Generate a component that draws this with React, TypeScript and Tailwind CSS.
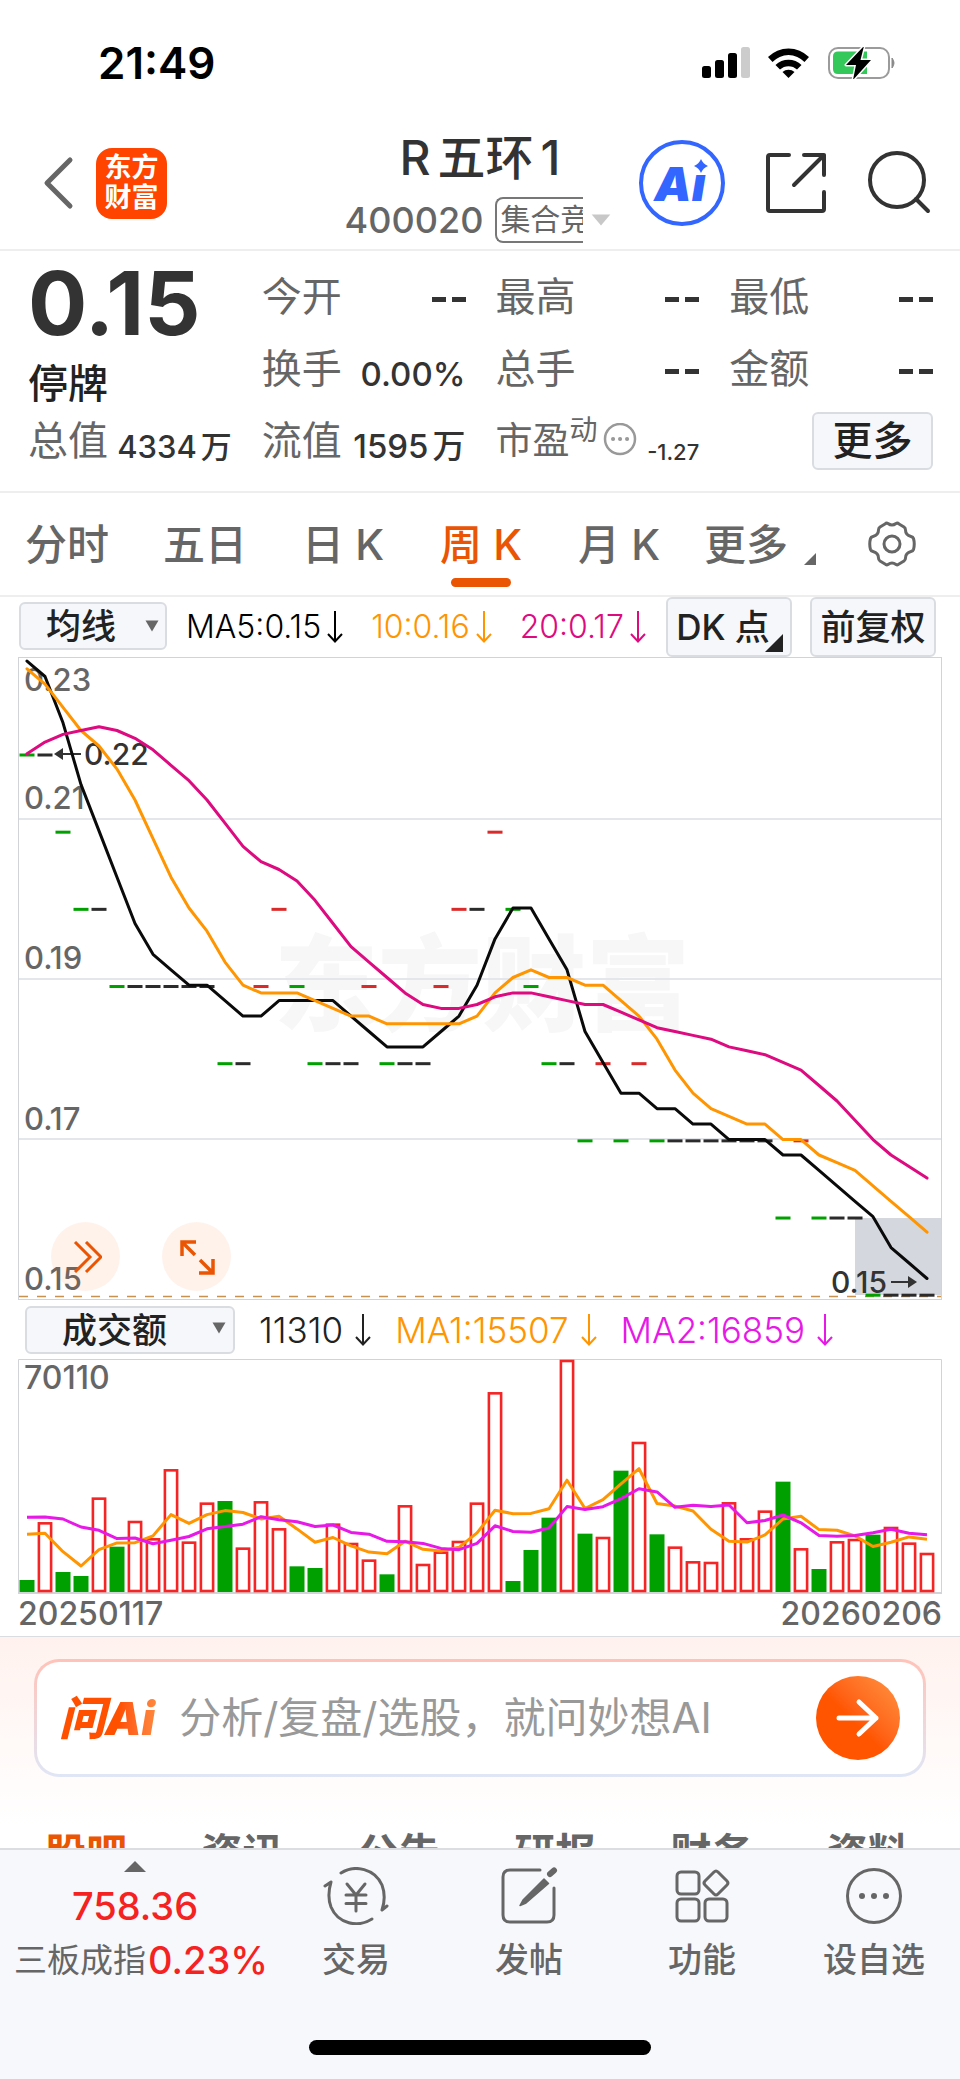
import React from "react";

/* ---------- data ---------- */

const STEP = 18;
const FIRST = 9;
const xAt = (i: number) => FIRST + i * STEP;

const PRIOR_CLOSES = [19, 19, 19, 19, 20, 21, 22, 23, 23, 24, 24, 24, 23, 22, 22, 23, 24, 24, 23];
const CLOSES = [
  22, 22, 21, 20, 20, 19, 19, 19, 19, 19, 19, 18, 18, 19, 20, 19, 18, 18, 18, 19, 18, 18, 18, 19, 20, 20, 21, 20, 19,
  18, 18, 17, 18, 17, 18, 17, 17, 17, 17, 17, 17, 17, 16, 17, 16, 16, 16, 15, 15, 15, 15,
];

const PRIOR_VOLUMES = [199, 120, 288, 383, 385, 194, 335, 263, 37];
const VOLUMES = [
  36, 209, 60, 48, 283, 136, 213, 161, 368, 151, 268, 273, 133, 272, 191, 77, 72, 205, 147, 97, 53, 260, 84, 121, 153,
  268, 599, 33, 126, 223, 696, 175, 165, 364, 450, 173, 136, 92, 90, 269, 161, 244, 331, 131, 69, 152, 159, 172, 195,
  148, 117,
];
const DOWN_BARS = new Set([0, 2, 3, 5, 11, 15, 16, 20, 27, 28, 29, 31, 33, 35, 42, 44, 47]);

function movingAverage(prior: number[], values: number[], span: number) {
  const all = [...prior, ...values];
  return values.map((_, i) => {
    const end = prior.length + i + 1;
    const part = all.slice(Math.max(0, end - span), end);
    return part.reduce((a, b) => a + b, 0) / part.length;
  });
}

const priceY = (p: number) => 98 + (22 - p) * 77.17;
const priceLine = (span: number) =>
  movingAverage(PRIOR_CLOSES, CLOSES, span)
    .map((p, i) => `${xAt(i)},${(priceY(p) - 1.3).toFixed(1)}`)
    .join(" ");

const volumeY = (v: number) => 233 - v / 3;
const volumeLine = (span: number) =>
  movingAverage(PRIOR_VOLUMES, VOLUMES, span)
    .map((v, i) => `${xAt(i)},${volumeY(v).toFixed(1)}`)
    .join(" ");

/* ---------- icons ---------- */

function StatusIcons() {
  return (
    <svg className="h-8 w-[194px]" viewBox="0 0 194 32" aria-hidden="true">
      <rect x="0" y="19" width="9" height="12" rx="2.5" />
      <rect x="13" y="13" width="9" height="18" rx="2.5" />
      <rect x="26" y="6" width="9" height="25" rx="2.5" />
      <rect x="39" y="0" width="9" height="31" rx="2.5" fill="#cccccc" />
      <path d="M66 10 A29 29 0 0 1 107 10 L102.500 15 A22 22 0 0 0 70.500 15 Z" />
      <path d="M73.500 18 A18.500 18.500 0 0 1 99.500 18 L95 22.500 A12.500 12.500 0 0 0 78 22.500 Z" />
      <path d="M80.500 25 A9 9 0 0 1 92.500 25 L86.500 31 Z" />
      <rect x="127" y="1" width="60" height="30" rx="9" fill="none" stroke="#9b9b9b" strokeWidth="2" />
      <path d="M190 11 Q194 16 190 21 Z" fill="#8a8a8a" stroke="#8a8a8a" />
      <path d="M136 4.500 H165 V27 H136 Q131 27 131 22 V9.500 Q131 4.500 136 4.500 Z" fill="#34c759" />
      <path
        d="M162 -1 L144 18 H154 L151 33 L169 13 H158.500 Z"
        fill="#000"
        stroke="#fff"
        strokeWidth="3"
        paintOrder="stroke"
        strokeLinejoin="round"
      />
    </svg>
  );
}

function DownArrow() {
  return (
    <svg className="h-8 w-4 shrink-0" viewBox="0 0 16 32" fill="none" stroke="currentColor" strokeWidth="2" aria-hidden="true">
      <path d="M8 0 V30 M1 23 L8 30.500 L15 23" />
    </svg>
  );
}

function Caret({ className }: { className: string }) {
  return (
    <svg className={className} viewBox="0 0 14 12" preserveAspectRatio="none" aria-hidden="true">
      <path d="M0.500 0.500 H13.500 L7 11.500 Z" fill="currentColor" />
    </svg>
  );
}

function GearIcon() {
  return (
    <svg className="size-12" viewBox="0 0 48 48" fill="none" stroke="#666" strokeWidth="3" strokeLinejoin="round" aria-hidden="true">
      <path d="M17 4 Q18.500 2.500 20 3.500 Q24 6.500 28 3.500 Q29.500 2.500 31 4 L36 7 Q37.500 8 37.500 10 Q37.500 15 43 16.500 Q45 17 45.500 18.500 Q47 24 45.500 29.500 Q45 31 43 31.500 Q37.500 33 37.500 38 Q37.500 40 36 41 L31 44 Q29.500 45.500 28 44.500 Q24 41.500 20 44.500 Q18.500 45.500 17 44 L12 41 Q10.500 40 10.500 38 Q10.500 33 5 31.500 Q3 31 2.500 29.500 Q1 24 2.500 18.500 Q3 17 5 16.500 Q10.500 15 10.500 10 Q10.500 8 12 7 Z" />
      <circle cx="24" cy="24" r="8" />
    </svg>
  );
}

function TradeIcon() {
  return (
    <svg className="h-[58px] w-[66px]" viewBox="0 0 66 58" fill="none" stroke="#666" strokeWidth="3" strokeLinecap="round" strokeLinejoin="round" aria-hidden="true">
      <path d="M18 6 C32 -3 52 2 59 18 C62 26 62 34 59 43 L64 39" />
      <path d="M49 52 C35 61 15 57 8 40 C5 32 5 25 8 15 L2 19" />
      <path d="M24 17 L33 28 L42 17 M23 28 H43 M23 36.500 H43 M33 28 V44" />
    </svg>
  );
}

function PostIcon() {
  return (
    <svg className="h-[58px] w-[58px]" viewBox="0 0 58 58" fill="none" stroke="#666" strokeWidth="3" strokeLinecap="round" aria-hidden="true">
      <path d="M40 3 H10 Q3 3 3 10 V48 Q3 55 10 55 H47 Q54 55 54 48 V21" />
      <path d="M50 7 L54 3.500" strokeWidth="6" />
      <path d="M44 12 L48.500 16.500 L26 36 L20 38.500 L23 33 Z" fill="#666" strokeWidth="1.500" strokeLinejoin="round" />
    </svg>
  );
}

function GridIcon() {
  return (
    <svg className="h-[58px] w-[58px]" viewBox="0 0 58 58" fill="none" stroke="#666" strokeWidth="3" strokeLinejoin="round" aria-hidden="true">
      <rect x="4" y="5" width="22" height="22" rx="4" />
      <rect x="4" y="32" width="22" height="22" rx="4" />
      <rect x="32" y="32" width="22" height="22" rx="4" />
      <path d="M41 5 Q43 3 45 5 L54 14 Q56 16 54 18 L45 27 Q43 29 41 27 L32 18 Q30 16 32 14 Z" />
    </svg>
  );
}

function MoreIcon() {
  return (
    <svg className="h-[58px] w-[58px]" viewBox="0 0 58 58" fill="none" stroke="#666" strokeWidth="3" aria-hidden="true">
      <circle cx="29" cy="29" r="26.500" />
      <g fill="#666" stroke="none">
        <circle cx="17" cy="29" r="3" />
        <circle cx="29" cy="29" r="3" />
        <circle cx="41" cy="29" r="3" />
      </g>
    </svg>
  );
}

/* ---------- sections ---------- */

function Header() {
  return (
    <header className="grid grid-cols-[1fr_auto_1fr] items-center border-b-2 border-[#eeeeee] pt-px pb-[6px]">
      <div className="flex items-center gap-[22px] pb-1 pl-[42px]">
        <button aria-label="返回">
          <svg className="h-14 w-8" viewBox="0 0 32 56" fill="none" stroke="#666" strokeWidth="5" strokeLinecap="round" strokeLinejoin="round">
            <path d="M28 5 L5 28 L28 51" />
          </svg>
        </button>
        <a href="#home" className="flex size-[71px] flex-col items-center justify-center rounded-2xl bg-[#ff4400] text-[27px] leading-[30px] font-bold text-white">
          <span>东方</span>
          <span>财富</span>
        </a>
      </div>
      <div className="flex flex-col items-center text-[#333]">
        <h1 className="flex gap-[7px] text-[48px] leading-[62px] font-medium">
          <span>R</span>
          <span>五环</span>
          <span>1</span>
        </h1>
        <div className="mt-2 flex items-center gap-3 pr-1 text-[#666]">
          <span className="text-[36px] leading-[46px] font-medium">400020</span>
          <span className="h-[46px] w-[88px] overflow-hidden rounded-l-lg border-2 border-r-0 border-[#777] pl-[3px] text-[30px] leading-[41px] whitespace-nowrap">
            集合竞
          </span>
          <Caret className="-ml-1 h-3 w-5 text-[#c8c8c8]" />
        </div>
      </div>
      <div className="flex items-center justify-end gap-[39px] pr-[29px] pb-1">
        <button aria-label="Ai" className="relative flex size-[86px] items-center justify-center rounded-full border-4 border-[#3366ff] pr-1 text-[47px] leading-none font-black text-[#3366ff] italic">
          Aı
          <svg className="absolute top-[15px] left-[51px] size-[14px]" viewBox="0 0 14 14" aria-hidden="true">
            <path d="M7 0 Q9 5 14 7 Q9 9 7 14 Q5 9 0 7 Q5 5 7 0 Z" fill="#3366ff" />
          </svg>
        </button>
        <button aria-label="分享">
          <svg className="size-16" viewBox="0 0 64 64" fill="none" stroke="#333" strokeWidth="4" strokeLinecap="round" strokeLinejoin="round">
            <path d="M25 4 H6 Q4 4 4 6 V58 Q4 60 6 60 H58 Q60 60 60 58 V41 M40 4 H60 V24 M60 4 L30 34" />
          </svg>
        </button>
        <button aria-label="搜索">
          <svg className="size-16" viewBox="0 0 64 64" fill="none" stroke="#333" strokeWidth="4" strokeLinecap="round">
            <circle cx="30" cy="29" r="27" />
            <path d="M49 48 L61 60" />
          </svg>
        </button>
      </div>
    </header>
  );
}

function Stat({ label, value, unit, small }: { label: string; value: string; unit?: string; small?: boolean }) {
  return (
    <div className="flex h-[72px] items-center justify-between whitespace-nowrap">
      <span className="text-[40px] leading-[68px] text-[#666]">{label}</span>
      <span className={`mt-3 flex items-baseline gap-1 font-medium text-[#333] ${small ? "text-[31px]" : "text-[33px]"}`}>
        {value}
        {unit && <span>{unit}</span>}
      </span>
    </div>
  );
}

function Empty({ label }: { label: string }) {
  return (
    <div className="flex h-[72px] items-center justify-between whitespace-nowrap">
      <span className="text-[40px] leading-[68px] text-[#666]">{label}</span>
      <span className="mt-1 flex gap-[6px]" aria-label="--">
        <span className="h-[5px] w-[14px] bg-[#333]" />
        <span className="h-[5px] w-[14px] bg-[#333]" />
      </span>
    </div>
  );
}

function Quote() {
  return (
    <section className="grid grid-cols-4 gap-x-[30px] border-b-2 border-[#eeeeee] pt-[10px] pr-[27px] pb-[14px] pl-[28px]">
      <div className="row-span-2 flex flex-col gap-[18px] text-[#333]">
        <strong className="text-[88px] leading-[84px] font-bold">0.15</strong>
        <span className="text-[40px] leading-[42px] font-medium text-[#222]">停牌</span>
      </div>
      <Empty label="今开" />
      <Empty label="最高" />
      <Empty label="最低" />
      <Stat label="换手" value="0.00%" />
      <Empty label="总手" />
      <Empty label="金额" />
      <Stat label="总值" value="4334" unit="万" small />
      <Stat label="流值" value="1595" unit="万" />
      <div className="flex h-[72px] items-center justify-between whitespace-nowrap text-[#666]">
        <span className="flex items-baseline text-[37px] leading-[68px]">
          市盈
          <sup className="text-[28px] leading-none">动</sup>
          <svg className="ml-1 size-9 self-center" viewBox="0 0 36 36" fill="none" stroke="#999" strokeWidth="2.500" aria-hidden="true">
            <circle cx="18" cy="16" r="15" />
            <path d="M11 16 H11.100 M18 16 H18.100 M25 16 H25.100" strokeWidth="4" strokeLinecap="round" />
          </svg>
        </span>
        <span className="mt-[22px] text-[22px] font-medium text-[#333]">-1.27</span>
      </div>
      <button className="h-[58px] w-[121px] self-center justify-self-end rounded-md border-2 border-[#d9dce1] bg-[#f6f7fa] text-[40px] leading-none font-medium text-[#222]">
        更多
      </button>
    </section>
  );
}

function PeriodTabs() {
  const tabs = ["分时", "五日", "日 K", "周 K", "月 K"];
  return (
    <nav className="grid h-[104px] grid-cols-[repeat(5,138fr)_140fr_130fr] items-stretch border-b-2 border-[#eeeeee] text-[42px] font-medium text-[#666]">
      {tabs.map((t) => (
        <button key={t} className={t === "周 K" ? "relative pr-1 text-[#ea5504]" : "relative pr-1"}>
          {t}
          {t === "周 K" && <span className="absolute bottom-2 left-1/2 -ml-[2px] h-[9px] w-[60px] -translate-x-1/2 rounded-full bg-[#ea5504]" />}
        </button>
      ))}
      <button className="flex items-center justify-center gap-4 whitespace-nowrap">
        更多
        <svg className="mt-[30px] h-3 w-3 shrink-0" viewBox="0 0 12 12" aria-hidden="true">
          <path d="M12 0 V12 H0 Z" fill="#666" />
        </svg>
      </button>
      <button className="flex items-center justify-center pr-[6px]" aria-label="设置">
        <GearIcon />
      </button>
    </nav>
  );
}

function PriceToolbar() {
  return (
    <div className="flex h-[60px] items-center pr-[24px] pl-[19px] text-[32px] font-light whitespace-nowrap">
      <div className="relative">
        <select aria-label="均线" className="h-12 w-[148px] appearance-none rounded-md border-2 border-[#d9dce1] bg-[#f6f7fa] pl-[25px] text-[35px] leading-none font-medium text-[#222]">
          <option>均线</option>
        </select>
        <Caret className="pointer-events-none absolute top-[18px] right-2 h-3 w-[14px] text-[#666]" />
      </div>
      <span className="ml-[19px] flex items-center gap-[6px] text-black">
        MA5:0.15
        <DownArrow />
      </span>
      <span className="ml-7 flex items-center gap-[6px] text-[#ff9500]">
        10:0.16
        <DownArrow />
      </span>
      <span className="ml-7 flex items-center gap-[6px] text-[#dd0a80]">
        20:0.17
        <DownArrow />
      </span>
      <button className="relative ml-auto h-[60px] w-[126px] rounded-md border-2 border-[#d9dce1] bg-[#f6f7fa] pr-3 text-[35px] leading-none font-medium text-[#222]">
        DK 点
        <svg className="absolute right-[7px] bottom-[3px] size-[18px]" viewBox="0 0 18 18" aria-hidden="true">
          <path d="M18 0 V18 H0 Z" fill="#222" />
        </svg>
      </button>
      <button className="ml-[18px] h-[60px] w-[126px] rounded-md border-2 border-[#d9dce1] bg-[#f6f7fa] text-[35px] leading-none font-medium text-[#222]">
        前复权
      </button>
    </div>
  );
}

function PriceChart() {
  const labels: [string, number][] = [
    ["0.23", 34],
    ["0.21", 152],
    ["0.19", 312],
    ["0.17", 473],
    ["0.15", 633],
  ];
  return (
    <div className="relative mx-[18px]">
      <svg className="block w-full" viewBox="0 0 924 644" role="img" aria-label="周K线图">
        <text x="256" y="366" fontSize="104" fontWeight="900" fill="#f7f7f7">
          东方财富
        </text>
        <rect x="0.500" y="0.500" width="923" height="642" fill="none" stroke="#d0d3d8" />
        <path d="M1 162 H923 M1 322 H923 M1 482 H923" stroke="#e3e6ea" strokeWidth="2" />
        <rect x="837" y="561" width="86" height="77" fill="#d4d7dd" />
        <path d="M1 639.500 H923" stroke="#c8924e" strokeWidth="1.500" strokeDasharray="9 9" />
        {labels.map(([text, y]) => (
          <text key={text} x="6" y={y} fontSize="31" fontWeight="500" fill="#666">
            {text}
          </text>
        ))}
        {CLOSES.map((c, i) => {
          const before = i === 0 ? 23 : CLOSES[i - 1];
          const color = c < before ? "#00a000" : c > before ? "#d92b2b" : "#2b2b2b";
          return <rect key={i} x={xAt(i) - 7.5} y={priceY(c) - 1.5} width="15" height="3" fill={color} />;
        })}
        <g fill="#333">
          <text x="66" y="108" fontSize="30" fontWeight="500">
            0.22
          </text>
          <path d="M36 97 L45 91 V103 Z" />
          <path d="M44 96 H63 V98 H44 Z" />
          <text x="813" y="636" fontSize="30" fontWeight="500">
            0.15
          </text>
          <path d="M899 625 L890 619 V631 Z" />
          <path d="M873 624 H891 V626 H873 Z" />
        </g>
        <g fill="none" strokeWidth="3" strokeLinejoin="round" strokeLinecap="round">
          <polyline points={priceLine(5)} stroke="#0a0a0a" />
          <polyline points={priceLine(10)} stroke="#ff9500" />
          <polyline points={priceLine(20)} stroke="#dd0a80" />
        </g>
      </svg>
      <div className="absolute bottom-[10px] left-[33px] flex gap-[42px] text-[#ea5504]">
        <button aria-label="展开" className="flex size-[69px] items-center justify-center rounded-full bg-[#ff5500]/8">
          <svg className="size-8" viewBox="0 0 32 32" fill="none" stroke="currentColor" strokeWidth="3">
            <path d="M5 1 L20 16 L5 31 M16 1 L31 16 L16 31" />
          </svg>
        </button>
        <button aria-label="全屏" className="flex size-[69px] items-center justify-center rounded-full bg-[#ff5500]/8">
          <svg className="size-9" viewBox="0 0 36 36" fill="none" stroke="currentColor" strokeWidth="3.500">
            <path d="M17 3 H3 V17 M3.500 3.500 L16 16 M34 20 V34 H20 M21 21 L33.500 33.500" />
          </svg>
        </button>
      </div>
    </div>
  );
}

function VolumeChart() {
  return (
    <>
      <div className="flex h-[58px] items-center pl-[25px] text-[35px] font-light whitespace-nowrap">
        <div className="relative">
          <select aria-label="成交额" className="h-12 w-[210px] appearance-none rounded-md border-2 border-[#d9dce1] bg-[#f6f7fa] pl-[35px] text-[35px] leading-none font-medium text-[#222]">
            <option>成交额</option>
          </select>
          <Caret className="pointer-events-none absolute top-[18px] right-[9px] h-3 w-[14px] text-[#666]" />
        </div>
        <span className="ml-6 flex items-center gap-3 text-[#222]">
          11310
          <DownArrow />
        </span>
        <span className="ml-6 flex items-center gap-3 text-[#ff9500]">
          MA1:15507
          <DownArrow />
        </span>
        <span className="ml-6 flex items-center gap-3 text-[#e619e6]">
          MA2:16859
          <DownArrow />
        </span>
      </div>
      <div className="mx-[18px]">
        <svg className="block w-full" viewBox="0 0 924 235" role="img" aria-label="成交额">
          <path d="M0.500 234 V0.500 H923.500 V234" fill="none" stroke="#d0d3d8" />
          <path d="M0 234 H924" stroke="#d0d3d8" strokeWidth="2" />
          <text x="6" y="30" fontSize="32" fontWeight="500" fill="#666">
            70110
          </text>
          {VOLUMES.map((v, i) =>
            DOWN_BARS.has(i) ? (
              <rect key={i} x={xAt(i) - 7.5} y={volumeY(v)} width="15" height={v / 3} fill="#00a000" />
            ) : (
              <rect key={i} x={xAt(i) - 6.1} y={volumeY(v) + 1} width="12.200" height={v / 3 - 2} fill="#fff" stroke="#f52525" strokeWidth="2.600" />
            ),
          )}
          <g fill="none" strokeWidth="3" strokeLinejoin="round">
            <polyline points={volumeLine(5)} stroke="#ff9500" />
            <polyline points={volumeLine(10)} stroke="#e619e6" />
          </g>
        </svg>
        <div className="flex h-[42px] justify-between text-[32px] leading-[40px] font-medium text-[#666]">
          <span>20250117</span>
          <span>20260206</span>
        </div>
      </div>
    </>
  );
}

function AskBar() {
  return (
    <section className="border-t border-[#d9dce1] bg-linear-to-b from-[#fff2ee] to-white px-[34px] pt-[22px] pb-[46px]">
      <form
        className="rounded-[25px] bg-linear-to-b from-[#ffc2b8] to-[#dfe6f6] p-[3px]"
        onSubmit={(e) => e.preventDefault()}
      >
        <div className="flex h-[112px] items-center rounded-[22px] bg-white pr-[23px] pl-[22px]">
          <span className="bg-linear-to-r from-[#ff5000] from-60% to-[#ff8a40] bg-clip-text pr-1 text-[46px] leading-[56px] font-black whitespace-nowrap text-transparent italic">
            问Ai
          </span>
          <input
            aria-label="问妙想AI"
            placeholder="分析/复盘/选股，就问妙想AI"
            className="ml-[20px] min-w-0 flex-1 text-[42px] leading-[56px] outline-none placeholder:text-[#999]"
          />
          <button aria-label="发送" className="flex size-[84px] shrink-0 items-center justify-center rounded-full bg-linear-to-tr from-[#ff5500] from-45% to-[#ff9440]">
            <svg className="h-10 w-11" viewBox="0 0 44 40" fill="none" stroke="#fff" strokeWidth="5" strokeLinecap="round" strokeLinejoin="round">
              <path d="M3 20 H40 M23 4 L40 20 L23 36" />
            </svg>
          </button>
        </div>
      </form>
    </section>
  );
}

function SectionTabs() {
  const tabs = ["股吧", "资讯", "公告", "研报", "财务", "资料"];
  return (
    <nav className="grid h-[25px] grid-cols-6 overflow-hidden pr-[14px] pl-[8px] text-[41px] leading-[60px] font-bold text-[#666]">
      {tabs.map((t, i) => (
        <a key={t} href={`#tab-${i}`} className={i === 0 ? "text-center text-[#ea5504]" : "text-center"}>
          {t}
        </a>
      ))}
    </nav>
  );
}

function BottomBar() {
  const actions: [string, () => React.JSX.Element][] = [
    ["交易", TradeIcon],
    ["发帖", PostIcon],
    ["功能", GridIcon],
    ["设自选", MoreIcon],
  ];
  return (
    <footer className="flex flex-1 flex-col border-t-2 border-[#dcdde0] bg-[#f7f8fb]">
      <div className="grid grid-cols-[270fr_172fr_174fr_172fr_172fr] text-[34px] leading-[44px] font-medium text-[#666]">
        <button className="flex flex-col items-center whitespace-nowrap">
          <svg className="mt-[11px] h-[11px] w-[22px]" viewBox="0 0 22 11" aria-hidden="true">
            <path d="M11 0 L22 11 H0 Z" fill="#666" />
          </svg>
          <span className="mt-[12px] text-[38px] leading-[44px] text-[#f52222]">758.36</span>
          <span className="mt-[10px] flex items-center gap-[2px] pl-3 text-[33px] font-normal">
            三板成指<span className="text-[38px] font-medium text-[#f52222]">0.23%</span>
          </span>
        </button>
        {actions.map(([label, Icon]) => (
          <button key={label} className="flex flex-col items-center pt-[17px]">
            <Icon />
            <span className="mt-[13px]">{label}</span>
          </button>
        ))}
      </div>
      <div className="mx-auto mt-auto mb-6 h-[15px] w-[342px] rounded-full bg-black" />
    </footer>
  );
}

export default function App() {
  return (
    <main className="flex min-h-screen flex-col overflow-x-hidden bg-white font-['Inter','Noto_Sans_CJK_SC',sans-serif]">
      <div className="flex h-[126px] items-center justify-between pr-[64px] pl-[98px]">
        <span className="text-[44px] leading-none font-semibold text-black">21:49</span>
        <StatusIcons />
      </div>
      <Header />
      <Quote />
      <PeriodTabs />
      <PriceToolbar />
      <PriceChart />
      <VolumeChart />
      <AskBar />
      <SectionTabs />
      <BottomBar />
    </main>
  );
}
